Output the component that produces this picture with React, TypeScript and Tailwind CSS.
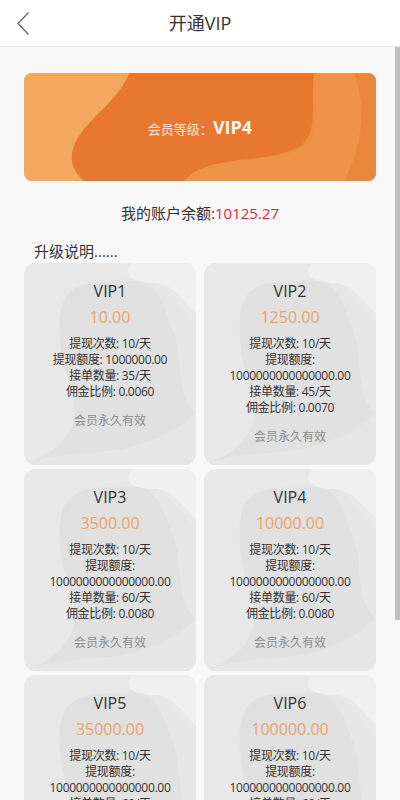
import React from 'react';

interface Level {
  name: string;
  price: string;
  times: string;
  quota: string;
  orders: string;
  rate: string;
}

const levels: Level[] = [
  { name: 'VIP1', price: '10.00', times: '10/天', quota: '1000000.00', orders: '35/天', rate: '0.0060' },
  { name: 'VIP2', price: '1250.00', times: '10/天', quota: '1000000000000000.00', orders: '45/天', rate: '0.0070' },
  { name: 'VIP3', price: '3500.00', times: '10/天', quota: '1000000000000000.00', orders: '60/天', rate: '0.0080' },
  { name: 'VIP4', price: '10000.00', times: '10/天', quota: '1000000000000000.00', orders: '60/天', rate: '0.0080' },
  { name: 'VIP5', price: '35000.00', times: '10/天', quota: '1000000000000000.00', orders: '60/天', rate: '0.0080' },
  { name: 'VIP6', price: '100000.00', times: '10/天', quota: '1000000000000000.00', orders: '60/天', rate: '0.0080' },
];

const font = { fontFamily: '"Open Sans", "Noto Sans CJK SC", sans-serif' };

const BannerBg = () => (
  <svg className="absolute inset-0 w-full h-full" viewBox="0 0 352 108" preserveAspectRatio="none">
    <defs>
      <linearGradient id="bn" x1="0" y1="0" x2="1" y2="0">
        <stop offset="0" stopColor="#f0a55c" />
        <stop offset="1" stopColor="#ec8a3e" />
      </linearGradient>
    </defs>
    <rect width="352" height="108" fill="url(#bn)" />
    <path d="M0 0 H105 C95 25 70 40 55 70 C45 90 50 100 60 108 H0 Z" fill="#f2a95f" />
    <path d="M105 0 H290 C285 40 300 70 260 80 C220 90 180 85 160 108 H60 C40 90 45 70 70 45 C90 25 100 15 105 0 Z" fill="#e8772f" />
    <path d="M290 0 H352 V108 H160 C185 85 225 92 262 82 C305 70 288 40 290 0 Z" fill="#ee9347" />
    <path d="M330 0 H352 V108 H320 C335 80 345 40 330 0 Z" fill="#ea843a" opacity="0.8" />
  </svg>
);

const CardBg = () => (
  <svg className="absolute inset-0 w-full h-full" viewBox="0 0 172 202" preserveAspectRatio="none">
    <defs>
      <linearGradient id="cg" x1="0" y1="0" x2="1" y2="1">
        <stop offset="0" stopColor="#e4e4e4" />
        <stop offset="1" stopColor="#e8e8e8" />
      </linearGradient>
    </defs>
    <rect width="172" height="202" fill="url(#cg)" />
    <path d="M0 0 H172 V60 C150 40 140 10 110 15 C80 20 60 15 45 30 C30 45 35 90 45 120 C60 165 40 185 0 202 Z" fill="#e8e8e8" />
    <path d="M110 0 H172 V50 C160 40 150 20 130 20 C100 20 100 5 110 0 Z" fill="#f0f0f0" />
    <path d="M45 30 C60 15 85 20 110 18 C135 18 140 45 150 70 C160 100 150 130 172 150 V202 H0 C45 185 60 160 45 120 C35 90 30 45 45 30 Z" fill="#dedede" opacity="0.7" />
    <path d="M0 202 C40 185 80 195 120 180 C150 170 160 160 172 150 V202 Z" fill="#e6e6e6" />
  </svg>
);

const LevelCard = ({ level }: { level: Level }) => (
  <div className="relative rounded-[12px] overflow-hidden pt-[18px] pb-[20px] text-center">
    <CardBg />
    <div className="relative">
      <div className="text-[16px] leading-[20px] text-[#333]">{level.name}</div>
      <div className="mt-[6px] text-[16px] leading-[20px] text-[#eba26a]">{level.price}</div>
      <div className="mt-[9px] text-[12px] leading-[16px] text-[#333] tracking-[-0.3px]">
        <div>提现次数: {level.times}</div>
        {level.quota.length > 12 ? (
          <>
            <div>提现额度:</div>
            <div>{level.quota}</div>
          </>
        ) : (
          <div>提现额度: {level.quota}</div>
        )}
        <div>接单数量: {level.orders}</div>
        <div>佣金比例: {level.rate}</div>
      </div>
      <div className="mt-[13px] text-[12px] leading-[16px] text-[#8c8c8c]">会员永久有效</div>
    </div>
  </div>
);

export default function App() {
  return (
    <div className="relative w-[400px] h-[800px] flex flex-col bg-[#f8f8f8]" style={font}>
      {/* Header */}
      <div className="h-[47px] flex-shrink-0 bg-white border-b border-[#e6e6e6] relative flex items-center justify-center">
        <svg className="absolute left-[16px] top-[11px]" width="14" height="25" viewBox="0 0 14 25">
          <path d="M12.5 1.5 L2 12.5 L12.5 23.5" fill="none" stroke="#666" strokeWidth="1.3" />
        </svg>
        <span className="text-[18px] text-[#333]">开通VIP</span>
      </div>

      {/* Scroll area */}
      <div className="flex-1 overflow-y-auto [scrollbar-width:none]">
        <div className="px-[24px] pt-[26px] pb-[110px]">
          <div className="relative h-[108px] rounded-[8px] overflow-hidden flex items-center justify-center">
            <BannerBg />
            <div className="relative flex items-baseline">
              <span className="text-[13px] text-[#fde9d8]">会员等级：</span>
              <span className="text-[18px] font-bold text-[#fff6ee]">VIP4</span>
            </div>
          </div>

          <div className="mt-[21px] text-center text-[15px] leading-[22px] text-[#333]">
            我的账户余额:<span className="text-[#d32a3f]">10125.27</span>
          </div>

          <div className="mt-[16px] pl-[10px] text-[15px] leading-[22px] text-[#333]">升级说明......</div>

          <div className="mt-[1px] grid grid-cols-2 gap-x-[8px] gap-y-[4px]">
            {levels.map(l => (
              <LevelCard key={l.name} level={l} />
            ))}
          </div>
        </div>
      </div>

      {/* scrollbar thumb */}
      <div className="absolute right-0 top-[47px] w-[5px] h-[573px] bg-[#c1c1c1]" />
    </div>
  );
}
